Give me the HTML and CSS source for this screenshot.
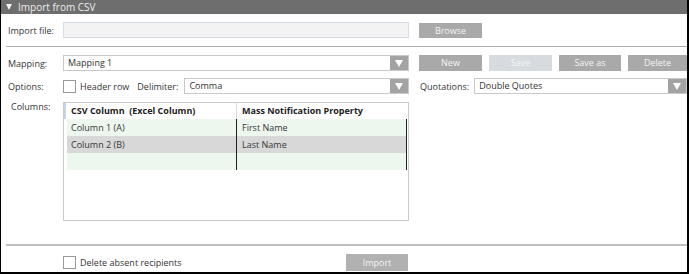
FILE: index.html
```html
<!DOCTYPE html>
<html lang="en">
<head>
  <meta charset="UTF-8">
  <meta name="viewport" content="width=device-width, initial-scale=1.0">
  <title>Import from CSV</title>
  <link rel="stylesheet" href="styles.css">
</head>
<body>
  <div class="panel">
    <!-- Cabecera del panel -->
    <div class="panel-head"><span class="caret"></span>Import from CSV</div>

    <!-- Archivo -->
    <div class="row row-file">
      <span class="field-label">Import file:</span>
      <div class="text-box"></div>
      <button class="btn">Browse</button>
    </div>
    <div class="rule"></div>

    <!-- Mapeo -->
    <div class="row row-mapping">
      <span class="field-label">Mapping:</span>
      <div class="combo combo-main"><span class="combo-text">Mapping 1</span><span class="combo-arrow"></span></div>
      <div class="btn-group">
        <button class="btn">New</button>
        <button class="btn btn-disabled">Save</button>
        <button class="btn btn-narrow">Save as</button>
        <button class="btn btn-last">Delete</button>
      </div>
    </div>

    <!-- Opciones -->
    <div class="row row-options">
      <span class="field-label">Options:</span>
      <div class="options-left">
        <span class="check"></span>
        <span class="inline-label">Header row</span>
        <span class="inline-label delim-label">Delimiter:</span>
        <div class="combo combo-delim"><span class="combo-text">Comma</span><span class="combo-arrow"></span></div>
      </div>
      <span class="inline-label quote-label">Quotations:</span>
      <div class="combo combo-quote"><span class="combo-text">Double Quotes</span><span class="combo-arrow"></span></div>
    </div>

    <!-- Columnas -->
    <div class="row row-columns">
      <span class="field-label">Columns:</span>
      <div class="grid-box">
        <div class="grid-head">
          <div class="cell cell-a">CSV Column&nbsp; (Excel Column)</div>
          <div class="cell cell-b">Mass Notification Property</div>
        </div>
        <div class="grid-body">
          <div class="grid-row alt-green">
            <div class="cell cell-a">Column 1 (A)</div>
            <div class="cell cell-b">First Name</div>
          </div>
          <div class="grid-row alt-gray">
            <div class="cell cell-a">Column 2 (B)</div>
            <div class="cell cell-b">Last Name</div>
          </div>
          <div class="grid-row alt-green">
            <div class="cell cell-a"></div>
            <div class="cell cell-b"></div>
          </div>
        </div>
      </div>
    </div>

    <div class="rule rule-bottom"></div>

    <!-- Pie -->
    <div class="row row-footer">
      <div class="footer-left">
        <span class="check"></span>
        <span class="inline-label">Delete absent recipients</span>
      </div>
      <button class="btn btn-import">Import</button>
    </div>
  </div>
</body>
</html>
```

FILE: styles.css
```css
* {
  box-sizing: border-box;
}
body {
  margin: 0;
  background: #fff;
  font-family: "Open Sans", "Noto Sans", Arial, sans-serif;
  font-size: 9px;
  color: #363636;
}
.panel {
  width: 689px;
  height: 274px;
  border-left: 1px solid #000;
  border-right: 2px solid #000;
  border-bottom: 2px solid #000;
  overflow: hidden;
}
.panel-head {
  height: 14px;
  background: #6e6e6e;
  color: #ececec;
  font-size: 10px;
  line-height: 14px;
  padding-left: 5px;
  display: flex;
  align-items: center;
}
.caret {
  width: 0;
  height: 0;
  border-left: 3.5px solid transparent;
  border-right: 3.5px solid transparent;
  border-top: 6px solid #f2f2f2;
  margin-right: 6px;
}
.row {
  display: flex;
  align-items: center;
}
.field-label {
  width: 62px;
  flex: none;
  padding-left: 7px;
}
.row-file {
  margin-top: 8px;
  height: 16px;
}
.text-box {
  width: 346px;
  height: 16px;
  background: #f3f3f3;
  border: 1px solid #d6dde8;
}
.btn {
  height: 16px;
  width: 63px;
  flex: none;
  border: none;
  padding: 0;
  background: #a9a9a9;
  color: #f4f4f4;
  font-family: inherit;
  font-size: 9px;
  line-height: 16px;
  text-align: center;
}
.row-file .btn {
  margin-left: 10px;
  height: 15px;
}
.btn-disabled {
  background: #d7dbe0;
  color: #f2f4f6;
}
.btn-narrow {
  width: 62px;
}
.btn-last {
  flex: 1;
  width: auto;
}
.rule {
  height: 1px;
  background: #ababab;
  margin: 8px 0 0 5px;
}
.row-mapping {
  margin-top: 8px;
  height: 16px;
}
.combo {
  height: 16px;
  display: flex;
  align-items: stretch;
  border: 1px solid #c9c9c9;
  background: #fff;
  color: #333;
}
.combo-text {
  flex: 1;
  padding-left: 4px;
  line-height: 14px;
}
.combo-arrow {
  width: 18px;
  background: #a3a3a3;
  display: flex;
  align-items: center;
  justify-content: center;
}
.combo-arrow::after {
  content: "";
  width: 0;
  height: 0;
  border-left: 4px solid transparent;
  border-right: 4px solid transparent;
  border-top: 7px solid #fff;
}
.combo-main {
  width: 346px;
}
.btn-group {
  flex: 1;
  display: flex;
  gap: 7px;
  margin-left: 10px;
}
.row-options {
  margin-top: 7px;
  height: 16px;
}
.options-left {
  width: 346px;
  display: flex;
  align-items: center;
}
.check {
  width: 13px;
  height: 13px;
  border: 1px solid #9a9a9a;
  background: #fff;
  flex: none;
}
.inline-label {
  margin-left: 4px;
  white-space: nowrap;
}
.delim-label {
  margin-left: 8px;
}
.combo-delim {
  flex: 1;
  margin-left: 6px;
}
.quote-label {
  margin-left: 11px;
}
.combo-quote {
  flex: 1;
  margin-left: 5px;
}
.row-columns {
  margin-top: 8px;
  align-items: flex-start;
}
.row-columns .field-label {
  padding-left: 10px;
  line-height: 10px;
}
.grid-box {
  width: 346px;
  height: 119px;
  border: 1px solid #cacaca;
  font-size: 9px;
}
.grid-head {
  display: flex;
  height: 16px;
  font-weight: bold;
  color: #222;
  padding-right: 1px;
  border-left: 2px solid #c5d5e8;
}
.grid-head .cell-a {
  border-right: 1px solid #dcdcdc;
}
.grid-body {
  margin-left: 3px;
  width: 340px;
  border-right: 1px solid #222;
}
.grid-row {
  display: flex;
  height: 17px;
}
.cell {
  line-height: 16px;
  white-space: nowrap;
}
.grid-head .cell-a {
  width: 171px;
  padding-left: 5px;
}
.grid-body .cell-a {
  width: 170px;
  padding-left: 4px;
  border-right: 1px solid #222;
}
.cell-b {
  flex: 1;
  padding-left: 5px;
}
.alt-green {
  background: #eef7ee;
}
.alt-gray {
  background: #d8d8d8;
}
.grid-row .cell {
  line-height: 17px;
}
.rule-bottom {
  height: 2px;
  background: #c0c0c0;
  margin-top: 23px;
}
.row-footer {
  margin-top: 8px;
  height: 17px;
  padding-left: 62px;
}
.footer-left {
  width: 283px;
  display: flex;
  align-items: center;
}
.btn-import {
  width: 62px;
  height: 17px;
  background: #b1b1b1;
}
```
